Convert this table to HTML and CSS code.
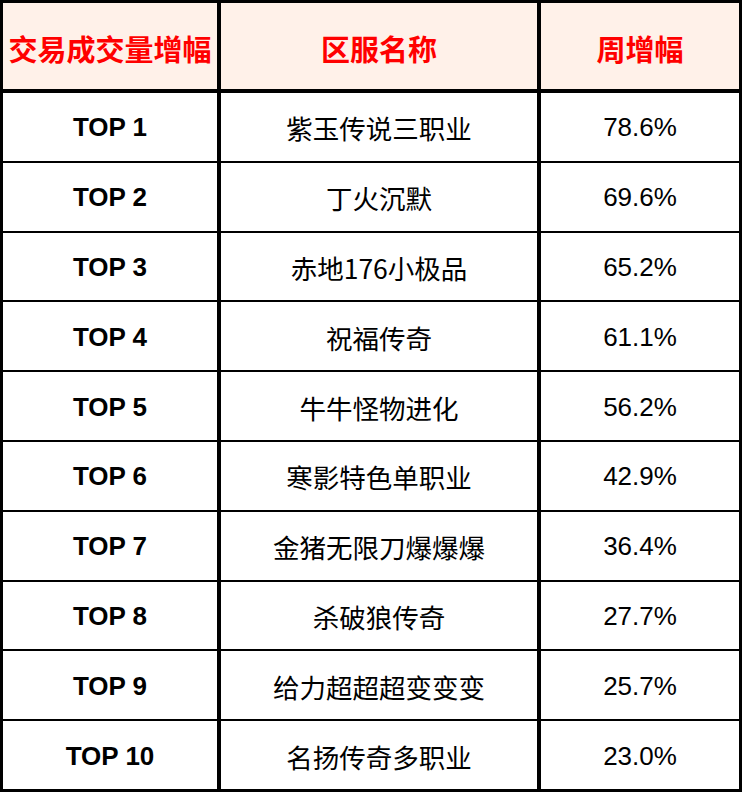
FILE: index.html
```html
<!DOCTYPE html>
<html lang="zh">
<head>
<meta charset="utf-8">
<link rel="stylesheet" href="styles.css">
</head>
<body>
<div class="table">
  <div class="row head">
    <div class="cell">交易成交量增幅</div>
    <div class="cell">区服名称</div>
    <div class="cell">周增幅</div>
  </div>
  <div class="body">
    <div class="row"><div class="cell rank">TOP 1</div><div class="cell name">紫玉传说三职业</div><div class="cell pct">78.6%</div></div>
    <div class="row"><div class="cell rank">TOP 2</div><div class="cell name">丁火沉默</div><div class="cell pct">69.6%</div></div>
    <div class="row"><div class="cell rank">TOP 3</div><div class="cell name">赤地176小极品</div><div class="cell pct">65.2%</div></div>
    <div class="row"><div class="cell rank">TOP 4</div><div class="cell name">祝福传奇</div><div class="cell pct">61.1%</div></div>
    <div class="row"><div class="cell rank">TOP 5</div><div class="cell name">牛牛怪物进化</div><div class="cell pct">56.2%</div></div>
    <div class="row"><div class="cell rank">TOP 6</div><div class="cell name">寒影特色单职业</div><div class="cell pct">42.9%</div></div>
    <div class="row"><div class="cell rank">TOP 7</div><div class="cell name">金猪无限刀爆爆爆</div><div class="cell pct">36.4%</div></div>
    <div class="row"><div class="cell rank">TOP 8</div><div class="cell name">杀破狼传奇</div><div class="cell pct">27.7%</div></div>
    <div class="row"><div class="cell rank">TOP 9</div><div class="cell name">给力超超超变变变</div><div class="cell pct">25.7%</div></div>
    <div class="row"><div class="cell rank">TOP 10</div><div class="cell name">名扬传奇多职业</div><div class="cell pct">23.0%</div></div>
  </div>
</div>
</body>
</html>
```

FILE: styles.css
```css
html, body {
  margin: 0;
  padding: 0;
  background: #ffffff;
}
.table {
  width: 742px;
  height: 792px;
  box-sizing: border-box;
  background: #000000;
  padding: 3px 3px 3px 3px;
  display: flex;
  flex-direction: column;
  gap: 4px;
}
.row {
  display: grid;
  grid-template-columns: 214px 316px 198px;
  column-gap: 4px;
}
.head {
  height: 86px;
}
.head .cell {
  background: #fff1e9;
  color: #ff0000;
  font-family: "Noto Sans CJK SC", "Liberation Sans", sans-serif;
  font-weight: 700;
  font-size: 29px;
  padding-top: 3px;
}
.body {
  display: flex;
  flex-direction: column;
  gap: 2px;
  flex: 1;
}
.body .row {
  flex: 1;
}
.cell {
  background: #ffffff;
  display: flex;
  align-items: center;
  justify-content: center;
  color: #000000;
  font-size: 26px;
  white-space: nowrap;
  box-sizing: border-box;
  padding-top: 2px;
}
.rank {
  font-family: "Liberation Sans", Arial, sans-serif;
  font-weight: 700;
}
.name {
  font-family: "Noto Sans CJK SC", "Liberation Sans", sans-serif;
  font-size: 26.5px;
}
.pct {
  font-family: "Liberation Sans", Arial, sans-serif;
}
```
